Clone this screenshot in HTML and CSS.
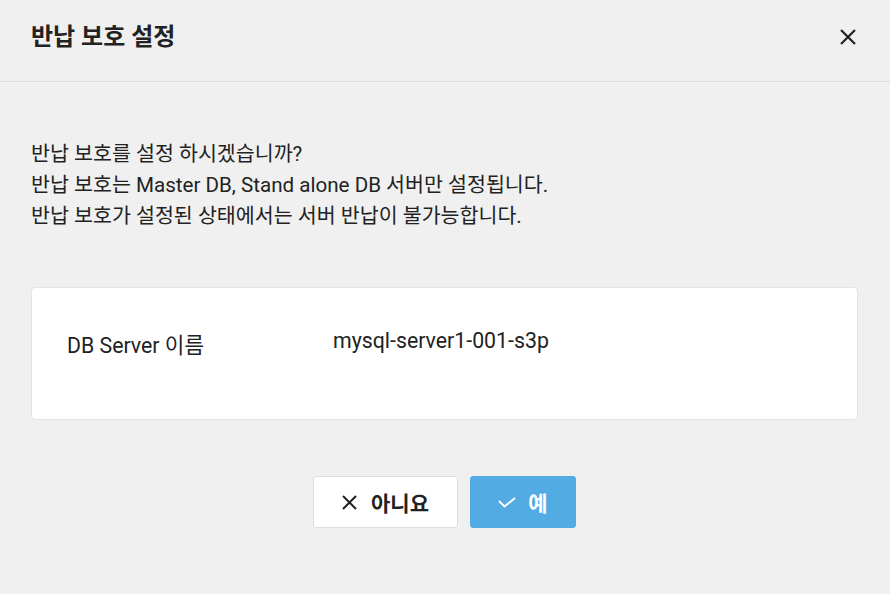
FILE: index.html
```html
<!DOCTYPE html>
<html lang="ko">
<head>
<meta charset="utf-8">
<link rel="stylesheet" href="styles.css">
</head>
<body>
<div class="dialog">
  <header class="header">
    <h1 class="title">반납 보호 설정</h1>
    <button class="close" aria-label="닫기">
      <svg width="16" height="16" viewBox="0 0 16 16"><path d="M1 1L15 15M15 1L1 15" stroke="#222" stroke-width="2.2" fill="none"/></svg>
    </button>
  </header>
  <main class="body">
    <p class="message">반납 보호를 설정 하시겠습니까?<br>반납 보호는 Master DB, Stand alone DB 서버만 설정됩니다.<br>반납 보호가 설정된 상태에서는 서버 반납이 불가능합니다.</p>
    <div class="card">
      <div class="row">
        <span class="label">DB Server 이름</span>
        <span class="value">mysql-server1-001-s3p</span>
      </div>
    </div>
    <div class="actions">
      <button class="btn btn-no">
        <svg width="15" height="15" viewBox="0 0 15 15"><path d="M1 1L14 14M14 1L1 14" stroke="#222" stroke-width="2" fill="none"/></svg>
        <span>아니요</span>
      </button>
      <button class="btn btn-yes">
        <svg width="18" height="11" viewBox="0 0 18 11"><path d="M1 4L6.5 9.5L17 1" stroke="#fff" stroke-width="2" fill="none"/></svg>
        <span>예</span>
      </button>
    </div>
  </main>
</div>
</body>
</html>
```

FILE: styles.css
```css
html, body {
  margin: 0;
  padding: 0;
  background: #f0f0f0;
}
body {
  font-family: Roboto, "Noto Sans CJK KR", sans-serif;
  color: #222;
}
.dialog {
  width: 890px;
  height: 594px;
  background: #f0f0f0;
}
.header {
  height: 82px;
  box-sizing: border-box;
  border-bottom: 1px solid #dcdcdc;
  display: flex;
  align-items: flex-start;
  justify-content: space-between;
  padding: 22px 34px 0 31px;
}
.title {
  margin: 0;
  font-size: 24px;
  font-weight: 700;
  line-height: 30px;
}
.close {
  border: 0;
  background: none;
  padding: 0;
  margin-top: 7px;
  width: 16px;
  height: 16px;
  display: flex;
  cursor: pointer;
}
.body {
  padding: 57px 32px 0 31px;
}
.message {
  margin: 0;
  font-size: 20.6px;
  line-height: 31px;
}
.card {
  margin-top: 55px;
  background: #fff;
  border: 1px solid #e4e4e4;
  border-radius: 4px;
  height: 133px;
  box-sizing: border-box;
  display: flex;
  align-items: center;
  padding: 0 35px;
}
.row {
  display: flex;
  font-size: 21.3px;
  margin-top: -21px;
}
.label {
  width: 266px;
}
.actions {
  margin-top: 56px;
  display: flex;
  justify-content: center;
  gap: 12px;
}
.btn {
  height: 52px;
  box-sizing: border-box;
  border-radius: 3px;
  display: flex;
  align-items: center;
  justify-content: center;
  font-family: Roboto, "Noto Sans CJK KR", sans-serif;
  font-size: 21px;
  font-weight: 700;
  padding: 0;
  cursor: pointer;
}
.btn-no {
  width: 145px;
  gap: 14px;
  background: #fff;
  border: 1px solid #dedede;
  color: #222;
}
.btn-yes {
  width: 106px;
  gap: 12px;
  background: #53abe3;
  border: 1px solid #53abe3;
  color: #fff;
}
```
